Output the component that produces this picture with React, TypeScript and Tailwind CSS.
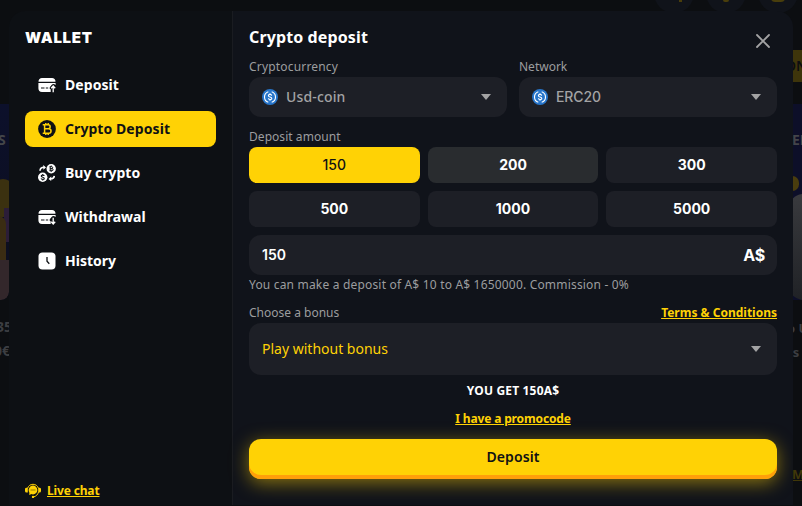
import React from "react";
import clsx from "clsx";

const CardIcon = ({ up }: { up?: boolean }) => (
  <svg viewBox="0 0 18 18" className="w-[18px] h-[18px]">
    <path fill="currentColor" d="M4 2h10a3.500 3.500 0 0 1 3.500 3.700H.5A3.500 3.500 0 0 1 4 2Z" />
    <path
      fill="currentColor"
      d="M.4 7h17.200v2c-1.600-1.600-3-1.300-4 0l-1.600 1.900c-.8 1-.3 2 .7 2.400v2.600H4A3.600 3.600 0 0 1 .4 12.300Z"
    />
    <path stroke="#0d1014" strokeWidth="1.200" d="M3 12h3.500M7.800 12h2.400" />
    {up ? (
      <path fill="none" stroke="currentColor" strokeWidth="1.300" d="M15.200 16.200V10.300M13.200 12.200l2-2.200 2 2.200" />
    ) : (
      <path fill="none" stroke="currentColor" strokeWidth="1.300" d="M15.200 9.700v6M13.200 13.800l2 2.200 2-2.200" />
    )}
  </svg>
);

const BitcoinIcon = () => (
  <svg viewBox="0 0 18 18" className="w-[18px] h-[18px]">
    <circle cx="9" cy="9" r="8.900" fill="#101114" />
    <path
      fill="none"
      stroke="#ffd205"
      strokeWidth="1.500"
      d="M4.700 4.700h5.400a2.050 2.050 0 0 1 0 4.100H6.600M6.600 8.800h4.200a2.250 2.250 0 0 1 0 4.500H4.700M6.600 4.700v8.600M7.800 3v2M10.200 3v2M7.800 13v2M10.200 13v2"
    />
  </svg>
);

const ExchangeIcon = () => (
  <svg viewBox="0 0 18 18" className="w-[18px] h-[18px]">
    <circle cx="13.200" cy="4.700" r="4.700" fill="currentColor" />
    <circle cx="4.700" cy="13.300" r="4.700" fill="currentColor" />
    <path
      fill="none"
      stroke="#0d1014"
      strokeWidth="1"
      d="M11.500 2.700h2.200a1 1 0 0 1 0 2h-1.500M12.200 4.700h1.900a1 1 0 0 1 0 2h-2.600M12.200 2.700v4M13.200 1.500v1.200M13.200 6.700v1.200"
    />
    <path
      fill="none"
      stroke="#0d1014"
      strokeWidth="1.100"
      d="M6.200 12c-.2-1.200-3-1.200-3 .1 0 1.400 3.100.8 3.100 2.300 0 1.300-3 1.300-3.200 0M4.700 10v1.200M4.700 15.400v1.200"
    />
    <path fill="none" stroke="currentColor" strokeWidth="1.600" d="M2 6.700C2.200 4.300 3.500 3.300 6 3.300M16.300 11.800c-.2 2.100-1.400 3-3.700 3" />
    <path fill="currentColor" d="M5.300 1 8 3.400 5.300 5.700ZM13.200 12.500 10.500 14.900 13.200 17.100Z" />
  </svg>
);

const HistoryIcon = () => (
  <svg viewBox="0 0 18 18" className="w-[18px] h-[18px]">
    <rect x=".5" y=".5" width="17" height="17" rx="4" fill="currentColor" />
    <path fill="none" stroke="#0d1014" strokeWidth="1.300" d="M9 5v4.200l2.300 2.500" />
  </svg>
);

const SupportIcon = () => (
  <svg viewBox="0 0 16 16" className="w-4 h-4 text-[#ffd205]">
    <circle cx="8" cy="7" r="4.400" fill="currentColor" />
    <path fill="none" stroke="currentColor" strokeWidth="1" d="M2.500 5.500C3.500 2.500 5.500 1.300 8 1.300s4.500 1.200 5.500 4.200M13.500 9c-.7 2.700-2.400 4.400-5 4.900" />
    <path fill="currentColor" d="M2.800 4.800v4.800H1.700A1.600 1.600 0 0 1 0 8V6.500a1.600 1.600 0 0 1 1.700-1.700ZM13.200 4.800v4.800h1.100A1.600 1.600 0 0 0 16 8V6.500a1.600 1.600 0 0 0-1.700-1.700ZM4.500 9l-.3 3 3-1.200Z" />
    <circle cx="8" cy="13.900" r="1.200" fill="currentColor" />
    <path stroke="#8a7408" strokeWidth=".9" d="M5.500 7h5" />
  </svg>
);

const UsdcIcon = () => (
  <svg viewBox="0 0 16 16" className="w-4 h-4">
    <circle cx="8" cy="8" r="8" fill="#2775ca" />
    <g fill="none" stroke="#fff" strokeWidth="1.100">
      <path d="M6.300 2.700a5.600 5.600 0 0 0 0 10.600M9.700 2.700a5.600 5.600 0 0 1 0 10.600" />
      <path d="M9.700 6.600C9.500 5 6.400 5 6.400 6.700 6.400 8.500 9.800 7.500 9.800 9.400 9.800 11 6.500 11 6.300 9.300M8 4.300v1.200M8 10.500v1.200" />
    </g>
  </svg>
);

const Caret = () => (
  <svg viewBox="0 0 10 6" className="w-2.5 h-1.5 mr-1">
    <path fill="#a3a3a4" d="M0 0h10L5 6Z" />
  </svg>
);

const menu = [
  { label: "Deposit", icon: <CardIcon up />, tracking: "tracking-[0.07px]" },
  { label: "Crypto Deposit", icon: <BitcoinIcon />, active: true, tracking: "tracking-[0.07px]" },
  { label: "Buy crypto", icon: <ExchangeIcon />, tracking: "" },
  { label: "Withdrawal", icon: <CardIcon />, tracking: "" },
  { label: "History", icon: <HistoryIcon />, tracking: "" },
];

const amounts = [150, 200, 300, 500, 1000, 5000];

// The dimmed casino page, seen only around the edges of the modal
const Backdrop = () => (
  <div className="absolute inset-0 overflow-hidden bg-[#0c0e11]" aria-hidden>
    <div className="absolute left-[654px] -top-[27px] flex gap-3">
      <div className="w-10 h-10 rounded-full bg-[#10131a] flex items-end justify-center pb-[11px]">
        <div className="w-[3px] h-[2px] ml-3 bg-[#4a3e0b]" />
      </div>
      <div className="w-10 h-10 rounded-full bg-[#10131a] flex items-end justify-center pb-[11px]">
        <div className="w-[6px] h-[2px] rounded-b-full bg-[#4a3e0b]" />
      </div>
      <div className="w-10 h-10 rounded-full bg-[#10131a] flex items-end justify-center pb-[11px]">
        <div className="w-[14px] h-1 rounded-b bg-[#493e0c]" />
      </div>
    </div>
    <div className="absolute left-0 top-[104px] w-[9px] h-[196px] overflow-hidden rounded-br-lg bg-linear-to-b from-[#0c102b] to-[#0c0e1c]">
      <span className="absolute -left-[2px] top-[27px] text-[14px] leading-[18px] font-bold text-[#434549]">S</span>
      <div className="absolute -left-2 top-[75px] w-[22px] h-[38px] rounded-t-full bg-[#3b3110]" />
      <div className="absolute left-1 top-[104px] w-2 h-[34px] bg-[#2b1d38]" />
      <div className="absolute -left-1 top-[112px] w-[10px] h-[46px] rounded-tr-lg bg-[#3a2c13]" />
      <div className="absolute left-0 top-[156px] w-[9px] h-10 rounded-br-lg bg-[#33272b]" />
    </div>
    <div className="absolute -left-[4px] top-[315px] text-[14px] leading-[24px] font-bold text-[#3c3e42] whitespace-nowrap">
      <div>35</div>
      <div className="-ml-[2px]">0€</div>
    </div>
    <div className="absolute left-[777px] top-[50px] w-10 h-8 bg-[#3e350b] pl-[8px] text-[14px] leading-8 font-semibold text-[#0c0e11]">
      ON
    </div>
    <div className="absolute left-[790px] top-[104px] w-5 h-[196px] overflow-hidden bg-[#0d0f29]">
      <span className="absolute left-[2px] top-[27px] text-[14px] leading-[18px] font-bold text-[#434549]">EL</span>
      <div className="absolute -left-[4px] top-[72px] w-[13px] h-[15px] rounded-full bg-[#4a3d0e]" />
      <div className="absolute -left-[2px] top-[90px] w-[30px] h-[106px] rounded-tl-2xl rounded-bl-2xl bg-linear-to-b from-[#393a3e] to-[#202226]" />
    </div>
    <div className="absolute left-[787px] top-[316px] text-[13px] leading-[24px] font-bold text-[#3c3e42] whitespace-nowrap">
      <div>o U</div>
      <div>rs</div>
    </div>
    <div className="absolute left-[792px] top-[466px] text-[13px] leading-4 font-bold underline text-[#403708]">Mo</div>
  </div>
);

const Sidebar = () => (
  <aside className="w-[223px] bg-[#0d1014] px-4 flex flex-col">
    <h2 className="pt-[17px] text-[15px] leading-5 font-black tracking-[0.75px] font-['Inter',sans-serif]">WALLET</h2>
    <nav className="mt-[19px] flex flex-col gap-2">
      {menu.map((item) => (
        <button
          key={item.label}
          className={clsx(
            "h-9 rounded-lg pl-[13px] flex items-center gap-[9px] text-sm font-bold",
            item.tracking,
            item.active ? "bg-[#ffd205] text-[#101114]" : "text-white"
          )}
        >
          {item.icon}
          <span>{item.label}</span>
        </button>
      ))}
    </nav>
    <button className="mt-auto mb-1.5 flex items-center gap-1.5 text-xs leading-4 font-bold text-[#ffd205]">
      <SupportIcon />
      <span className="underline tracking-[-0.15px]">Live chat</span>
    </button>
  </aside>
);

const CoinSelect = ({ label, children, labelClass }: { label: string; children: React.ReactNode; labelClass: string }) => (
  <div className="flex-1">
    <div className={clsx("text-xs leading-5 text-[#9c9d9f]", labelClass)}>{label}</div>
    <button className="w-full h-10 rounded-xl bg-[#1d1f26] pl-[13px] pr-3 flex items-center text-sm text-[#a3a3a4]">
      <UsdcIcon />
      <span className="ml-2 mr-auto">{children}</span>
      <Caret />
    </button>
  </div>
);

export default function App() {
  return (
    <div className="relative w-[802px] h-[506px] overflow-hidden bg-[#0c0e11] text-white font-['Noto_Sans',sans-serif]">
      <Backdrop />
      <div className="relative ml-[9px] mt-[11px] w-[784px] h-[494px] flex rounded-t-2xl overflow-hidden">
        <Sidebar />
        <main className="flex-1 border-l border-[#1a1c21] bg-[#10131a] px-4">
          <div className="pt-4 h-[46px] flex justify-between">
            <h1 className="text-base leading-5 font-bold tracking-[0.12px]">Crypto deposit</h1>
            <button className="w-7 h-7 flex items-center justify-center">
              <svg viewBox="0 0 14 14" className="w-3.5 h-3.5">
                <path stroke="#a3a3a4" strokeWidth="1.800" strokeLinecap="round" d="m1 1 12 12M13 1 1 13" />
              </svg>
            </button>
          </div>

          <div className="flex gap-3">
            <CoinSelect label="Cryptocurrency" labelClass="tracking-[0.18px]">
              <span className="font-medium tracking-[0.15px]">Usd-coin</span>
            </CoinSelect>
            <CoinSelect label="Network" labelClass="">
              <span className="font-medium tracking-[-0.1px] font-['Inter',sans-serif]">ERC20</span>
            </CoinSelect>
          </div>

          <div className="mt-2.5 text-xs leading-5 text-[#9c9d9f] tracking-[0.05px]">Deposit amount</div>
          <div className="grid grid-cols-3 gap-2 font-['Inter',sans-serif]">
            {amounts.map((amount) => (
              <button
                key={amount}
                className={clsx(
                  "h-9 rounded-lg text-sm",
                  amount === 150 && "bg-[#ffd205] text-[#101114] font-medium tracking-[0.1px]",
                  amount === 200 && "bg-[#292c2f] font-bold",
                  amount > 200 && "bg-[#1d1f26] font-bold"
                )}
              >
                {amount}
              </button>
            ))}
          </div>
          <div className="mt-2 h-10 rounded-xl bg-[#1d1f26] pl-[13px] pr-3 flex items-center justify-between font-['Inter',sans-serif]">
            <span className="text-sm font-semibold">150</span>
            <span className="text-base font-bold tracking-[-0.2px]">A$</span>
          </div>
          <div className="text-xs leading-5 text-[#9c9d9f] tracking-[0.185px]">
            You can make a deposit of A$ 10 to A$ 1650000. Commission - 0%
          </div>

          <div className="mt-2 flex justify-between text-xs leading-5">
            <span className="text-[#9c9d9f]">Choose a bonus</span>
            <a className="font-bold underline text-[#ffd205]">Terms &amp; Conditions</a>
          </div>
          <button className="w-full h-[52px] rounded-xl bg-[#1d1f26] pl-[13px] pr-3 flex items-center justify-between text-sm text-[#ffd205]">
            Play without bonus
            <Caret />
          </button>

          <div className="mt-2 text-center text-xs leading-4 font-bold tracking-[0.17px]">YOU GET 150A$</div>
          <div className="mt-3 text-center text-xs leading-4 font-bold">
            <a className="underline text-[#ffd205] tracking-[-0.14px]">I have a promocode</a>
          </div>
          <button className="mt-3 w-full h-10 pb-1 rounded-xl bg-[#ffd205] text-sm font-semibold tracking-[0.1px] text-[#101114] shadow-[inset_0_-4px_0_#ff9f0a,0_4px_18px_rgba(255,210,5,0.5)]">
            Deposit
          </button>
        </main>
      </div>
    </div>
  );
}
